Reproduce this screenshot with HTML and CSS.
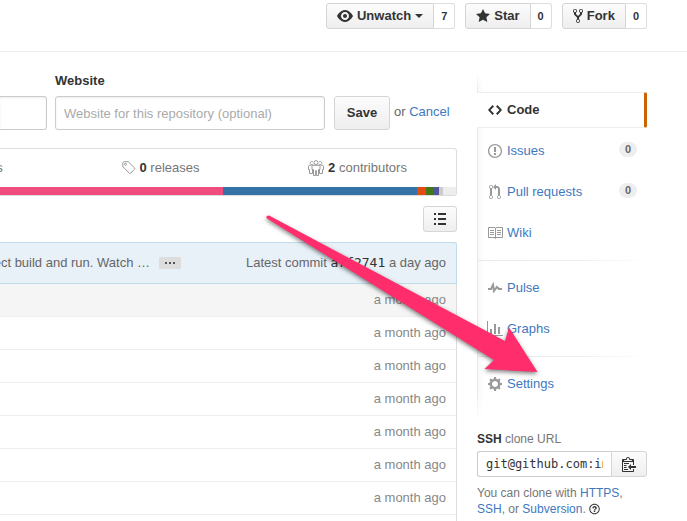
FILE: index.html
```html
<!DOCTYPE html>
<html lang="en">
<head>
<meta charset="utf-8">
<meta name="viewport" content="width=device-width, initial-scale=1">
<title>Repository</title>
<link rel="stylesheet" href="styles.css">
</head>
<body>
<header class="repo-head">
  <div class="btn-group">
    <button class="btn btn-sm" type="button">
      <svg class="icon" width="16" height="16" viewBox="0 0 16 16"><path fill-rule="evenodd" d="M8.060 2C3 2 0 8 0 8s3 6 8.060 6C13 14 16 8 16 8s-3-6-7.940-6zM8 12c-2.200 0-4-1.780-4-4 0-2.200 1.800-4 4-4 2.220 0 4 1.800 4 4 0 2.220-1.780 4-4 4zm2-4c0 1.110-.890 2-2 2-1.110 0-2-.890-2-2 0-1.110.890-2 2-2 1.110 0 2 .890 2 2z"/></svg>
      Unwatch<span class="caret"></span>
    </button>
    <a class="count" href="#watchers">7</a>
  </div>
  <div class="btn-group">
    <button class="btn btn-sm" type="button">
      <svg class="icon" width="14" height="16" viewBox="0 0 14 16"><path d="M14 6l-4.900-.640L7 1 4.900 5.360 0 6l3.600 3.260L2.670 14 7 11.670 11.330 14l-.930-4.740z"/></svg>
      Star
    </button>
    <a class="count" href="#stars">0</a>
  </div>
  <div class="btn-group">
    <button class="btn btn-sm" type="button">
      <svg class="icon" width="10" height="16" viewBox="0 0 10 16"><path fill-rule="evenodd" d="M8 1a1.993 1.993 0 0 0-1 3.720V6L5 8 3 6V4.720A1.993 1.993 0 0 0 2 1a1.993 1.993 0 0 0-1 3.720V6.500l3 3v1.780A1.993 1.993 0 0 0 5 15a1.993 1.993 0 0 0 1-3.720V9.500l3-3V4.720A1.993 1.993 0 0 0 8 1zM2 4.200C1.340 4.200.8 3.650.8 3c0-.650.550-1.200 1.200-1.200.650 0 1.200.550 1.200 1.200 0 .650-.550 1.200-1.200 1.200zm3 10c-.660 0-1.200-.550-1.200-1.200 0-.650.550-1.200 1.200-1.200.650 0 1.200.550 1.200 1.200 0 .650-.550 1.200-1.200 1.200zm3-10c-.660 0-1.200-.550-1.200-1.200 0-.650.550-1.200 1.200-1.200.650 0 1.200.550 1.200 1.200 0 .650-.550 1.200-1.200 1.200z"/></svg>
      Fork
    </button>
    <a class="count" href="#forks">0</a>
  </div>
</header>

<div class="layout">
  <main class="main">
    <form class="meta-form">
      <input class="field field-desc" type="text" aria-label="Description">
      <div class="field-group">
        <label for="website">Website</label>
        <input class="field" id="website" type="text" placeholder="Website for this repository (optional)">
      </div>
      <button class="btn btn-save" type="button">Save</button>
      <span class="cancel">or <a href="#cancel">Cancel</a></span>
    </form>

    <section class="stats">
      <ul class="stats-list">
        <li>
          <svg class="stat-icon" width="10" height="16" viewBox="0 0 10 16"><circle cx="2" cy="3" r="1.500"/><circle cx="2" cy="13" r="1.500"/><circle cx="8" cy="4" r="1.500"/><path d="M2 4.500v7M8 5.500q0 3-6 4"/></svg>
          <span><strong>1</strong> branches</span>
        </li>
        <li>
          <svg class="stat-icon" width="14" height="16" viewBox="0 0 14 16"><path d="M.8 3.500v3l6.600 6.800q.5.500 1 0l4.300-4.200q.5-.5 0-1L6.200 1.700H2.500Q.8 1.700.8 3.500z"/><circle cx="3.500" cy="4.300" r="1"/></svg>
          <span><strong>0</strong> releases</span>
        </li>
        <li>
          <svg class="stat-icon" width="16" height="16" viewBox="0 0 16 16"><circle cx="8" cy="2.600" r="2"/><path d="M5 5.300h6q1 0 1 1v3.200H10.500V15.500H8.400V10.500H7.600V15.500H5.500V9.500H4V6.300q0-1 1-1z"/><path d="M5.300 3.700A1.600 1.600 0 1 1 4.900 1.900M10.700 3.700A1.600 1.600 0 1 0 11.100 1.900M3.600 5.300H1.500q-1 0-1 1v3.200h1V13.500H4.500V10M12.400 5.300h2.100q1 0 1 1v3.200h-1V13.500H11.500V10"/></svg>
          <span><strong>2</strong> contributors</span>
        </li>
      </ul>
      <div class="languages">
        <span class="lang lang-a"></span><span class="lang lang-b"></span><span class="lang lang-c"></span><span class="lang lang-d"></span><span class="lang lang-e"></span><span class="lang lang-f"></span><span class="lang lang-g"></span>
      </div>
    </section>

    <div class="toolbar">
      <button class="btn btn-list" type="button" aria-label="List">
        <svg class="icon" width="12" height="12" viewBox="0 0 12 12"><path d="M0 0h2v2H0zM4 0h8v2H4zM0 5h2v2H0zM4 5h8v2H4zM0 10h2v2H0zM4 10h8v2H4z"/></svg>
      </button>
    </div>

    <section class="files">
      <div class="commit">
        <div class="commit-title"><span>project build and run. Watch …</span><button class="expander" type="button" aria-label="More"><i></i><i></i><i></i></button></div>
        <div>Latest commit <a class="sha" href="#commit">a7f2741</a> a day ago</div>
      </div>
      <table class="file-table">
        <tbody>
          <tr><td>a month ago</td></tr>
          <tr><td>a month ago</td></tr>
          <tr><td>a month ago</td></tr>
          <tr><td>a month ago</td></tr>
          <tr><td>a month ago</td></tr>
          <tr><td>a month ago</td></tr>
          <tr><td>a month ago</td></tr>
          <tr><td></td></tr>
        </tbody>
      </table>
    </section>
  </main>

  <aside class="side">
    <nav class="menu">
      <a class="item selected" href="#code"><svg class="icon" width="16" height="16" viewBox="-1 0 16 16"><path d="M9.500 3L8 4.500 11.500 8 8 11.500 9.500 13 14 8 9.500 3zm-5 0L0 8l4.500 5L6 11.500 2.500 8 6 4.500 4.500 3z"/></svg>Code</a>
      <a class="item" href="#issues"><svg class="icon" width="16" height="16" viewBox="-1 0 16 16"><path fill-rule="evenodd" d="M7 2.300c3.140 0 5.700 2.560 5.700 5.700s-2.560 5.700-5.700 5.700A5.710 5.710 0 0 1 1.300 8c0-3.140 2.560-5.700 5.700-5.700zM7 1C3.140 1 0 4.140 0 8s3.140 7 7 7 7-3.140 7-7-3.140-7-7-7zm1 3H6v5h2V4zm0 6H6v2h2v-2z"/></svg>Issues<span class="pill">0</span></a>
      <a class="item" href="#pulls"><svg class="icon" width="16" height="16" viewBox="-2 0 16 16"><path fill-rule="evenodd" d="M11 11.280V5c-.030-.780-.340-1.470-.940-2.060C9.460 2.350 8.780 2.030 8 2H7V0L4 3l3 3V4h1c.270.020.480.110.690.310.210.200.300.420.310.690v6.280A1.993 1.993 0 0 0 10 15a1.993 1.993 0 0 0 1-3.720zm-1 2.920c-.660 0-1.200-.550-1.200-1.200 0-.650.550-1.200 1.200-1.200.650 0 1.200.550 1.200 1.200 0 .650-.550 1.200-1.200 1.200zM4 3c0-1.110-.890-2-2-2a1.993 1.993 0 0 0-1 3.720v6.560A1.993 1.993 0 0 0 2 15a1.993 1.993 0 0 0 1-3.720V4.720c.590-.340 1-.980 1-1.720zm-.8 10c0 .660-.550 1.200-1.200 1.200-.650 0-1.200-.550-1.200-1.200 0-.650.550-1.200 1.200-1.200.650 0 1.200.550 1.200 1.200zM2 4.200C1.340 4.200.8 3.650.8 3c0-.650.550-1.200 1.200-1.200.650 0 1.200.550 1.200 1.200 0 .650-.550 1.200-1.200 1.200z"/></svg>Pull requests<span class="pill">0</span></a>
      <a class="item" href="#wiki"><svg class="icon" width="16" height="16" viewBox="0 0 16 16"><path fill-rule="evenodd" d="M3 5h4v1H3V5zm0 3h4V7H3v1zm0 2h4V9H3v1zm11-5h-4v1h4V5zm0 2h-4v1h4V7zm0 2h-4v1h4V9zm2-6v9c0 .550-.450 1-1 1H9.500l-1 1-1-1H2c-.550 0-1-.450-1-1V3c0-.550.450-1 1-1h5.500l1 1 1-1H15c.550 0 1 .450 1 1zm-8 .5L7.500 3H2v9h6V3.500zm7-.5H9.500l-.5.5V12h6V3z"/></svg>Wiki</a>
      <div class="rule"></div>
      <a class="item" href="#pulse"><svg class="icon" width="16" height="16" viewBox="-1 0 16 16"><path d="M11.500 8L8.800 5.400 6.600 8.500 5.500 1.600 2.380 8H0v2h3.600l.9-1.800.9 5.400L9 8.500l1.600 1.500H14V8h-2.500z"/></svg>Pulse</a>
      <a class="item" href="#graphs"><svg class="icon" width="16" height="16" viewBox="0 0 16 16"><path d="M16 14v1H0V0h1v14h15zM5 13H3V8h2v5zm4 0H7V3h2v10zm4 0h-2V6h2v7z"/></svg>Graphs</a>
      <div class="rule"></div>
      <a class="item" href="#settings"><svg class="icon" width="16" height="16" viewBox="-1 0 16 16"><path fill-rule="evenodd" d="M14 8.770v-1.600l-1.940-.640-.450-1.090.880-1.840-1.130-1.130-1.810.910-1.090-.450-.690-1.920h-1.600l-.630 1.940-1.110.450-1.840-.880-1.130 1.130.910 1.810-.450 1.090L0 7.230v1.590l1.940.640.450 1.090-.880 1.840 1.130 1.130 1.810-.910 1.090.450.690 1.920h1.590l.630-1.940 1.110-.450 1.840.880 1.130-1.130-.920-1.810.470-1.090L14 8.750zM7 11c-1.660 0-3-1.340-3-3s1.340-3 3-3 3 1.340 3 3-1.340 3-3 3z"/></svg>Settings</a>
    </nav>

    <section class="clone">
      <label for="clone-url"><strong>SSH</strong> clone URL</label>
      <div class="clone-row">
        <div class="clone-field"><input id="clone-url" type="text" value="git@github.com:inbox/app.git" readonly></div>
        <button class="btn btn-copy" type="button" aria-label="Copy">
          <svg class="icon" width="14" height="16" viewBox="0 0 14 16"><path fill-rule="evenodd" d="M2 13h4v1H2v-1zm5-6H2v1h5V7zm2 3V8l-3 3 3 3v-2h5v-2H9zM4.500 9H2v1h2.500V9zM2 12h2.500v-1H2v1zm9 1h1v2c-.020.280-.110.520-.3.7-.190.180-.420.280-.7.3H1c-.550 0-1-.450-1-1V4c0-.550.450-1 1-1h3c0-1.110.890-2 2-2 1.110 0 2 .890 2 2h3c.550 0 1 .450 1 1v5h-1V6H1v9h10v-2zM2 5h8c0-.550-.450-1-1-1H8c-.550 0-1-.450-1-1s-.450-1-1-1-1 .450-1 1-.450 1-1 1H3c-.550 0-1 .450-1 1z"/></svg>
        </button>
      </div>
      <p>You can clone with <a href="#https">HTTPS</a>, <a href="#ssh">SSH</a>, or <a href="#svn">Subversion</a>.
        <svg class="help" width="11" height="12" viewBox="0 0 14 16"><path fill-rule="evenodd" d="M6 10h2v2H6v-2zm4-3.500C10 8.640 8 9 8 9H6c0-.550.450-1 1-1h.5c.280 0 .5-.220.5-.5v-1c0-.280-.220-.5-.5-.5h-1c-.280 0-.5.220-.5.5V7H4c0-1.500 1.500-3 3-3s3 1 3 2.500zM7 2.300c3.140 0 5.700 2.560 5.700 5.700s-2.560 5.700-5.700 5.700A5.710 5.710 0 0 1 1.300 8c0-3.140 2.560-5.700 5.700-5.700zM7 1C3.140 1 0 4.140 0 8s3.140 7 7 7 7-3.140 7-7-3.140-7-7-7z"/></svg></p>
    </section>
  </aside>
</div>

<svg class="pointer" width="290" height="180" viewBox="260 205 290 180" aria-hidden="true">
  <path d="M269 215.500L505 341L509 327.500L537.500 372L484.500 369L494 360L267 218.500Q265 216 269 215.500z"/>
</svg>
</body>
</html>
```
FILE: styles.css
```css
* { box-sizing: border-box; }

html { scrollbar-width: none; }

body {
  margin: 0;
  position: relative;
  overflow-x: hidden;
  background: #fff;
  color: #666;
  font: 13px/18px "Liberation Sans", Arial, sans-serif;
}

button, input { font: inherit; }
a { color: #4078c0; text-decoration: none; }
strong { color: #333; }
.icon { fill: currentColor; flex: none; }

.btn {
  display: flex;
  align-items: center;
  justify-content: center;
  gap: 4px;
  padding: 0 10px;
  border: 1px solid #d5d5d5;
  border-radius: 3px;
  background: linear-gradient(#fcfcfc, #eee);
  color: #333;
  font-weight: bold;
}

.repo-head {
  display: flex;
  justify-content: flex-end;
  gap: 10px;
  padding: 3px 40px 22px 0;
  border-bottom: 1px solid #eee;
}

.btn-group { display: flex; height: 26px; }
.btn-sm { border-radius: 3px 0 0 3px; }

.caret {
  border: 4px solid transparent;
  border-top-color: #333;
  border-bottom: 0;
}

.count {
  padding: 0 7px;
  border: 1px solid #ddd;
  border-left: 0;
  border-radius: 0 3px 3px 0;
  color: #333;
  font-size: 11px;
  font-weight: bold;
  line-height: 24px;
}

.layout {
  display: grid;
  grid-template-columns: minmax(0, 1fr) 170px;
  gap: 20px;
  padding: 20px 40px 0 0;
}

.meta-form { display: flex; align-items: flex-end; }

.field {
  width: 100%;
  height: 34px;
  padding: 0 8px;
  border: 1px solid #ccc;
  border-radius: 3px;
  box-shadow: inset 0 1px 2px rgba(0, 0, 0, 0.075);
}

.field::placeholder { color: #aaa; }

.field-desc {
  flex: 1;
  width: 0;
  border-left: 0;
  border-radius: 0 3px 3px 0;
}

.field-group { width: 270px; margin: 0 9px 0 8px; }

.field-group label {
  display: block;
  margin-bottom: 6px;
  color: #333;
  font-weight: bold;
}

.btn-save { width: 56px; height: 34px; }
.cancel { width: 67px; padding-left: 4px; line-height: 36px; }

.stats {
  margin-top: 18px;
  border: 1px solid #ddd;
  border-left: 0;
  border-radius: 0 3px 3px 0;
  overflow: hidden;
}

.stats-list {
  display: flex;
  justify-content: flex-end;
  margin: 0;
  padding: 0;
  list-style: none;
  color: #767676;
}

.stats-list li {
  flex: none;
  display: flex;
  align-items: center;
  justify-content: center;
  gap: 4px;
  width: 197px;
  height: 38px;
}

.stat-icon { fill: none; stroke: #999; stroke-width: 1; }

.languages { display: flex; height: 8px; }
.lang { flex: none; }
.lang-a { flex: 1; background: #ee4d7d; }
.lang-b { width: 194px; background: #3572a5; }
.lang-c { width: 9px; background: #e34c10; }
.lang-d { width: 8px; background: #427819; }
.lang-e { width: 5px; background: #555599; }
.lang-f { width: 4px; background: #ccc; }
.lang-g { width: 13px; background: #ededed; }

.toolbar { display: flex; justify-content: flex-end; margin: 10px 0; }
.btn-list { width: 34px; height: 26px; }

.files {
  border-right: 1px solid #ddd;
  border-radius: 0 3px 0 0;
}

.commit {
  display: flex;
  justify-content: space-between;
  align-items: center;
  height: 42px;
  margin-right: -1px;
  padding-right: 10px;
  border: 1px solid #c1dce9;
  border-left: 0;
  border-radius: 0 3px 0 0;
  background: #e8f0f8;
  white-space: nowrap;
}

.commit-title {
  display: flex;
  justify-content: flex-end;
  align-items: center;
  gap: 9px;
  width: 181px;
}

.expander {
  display: flex;
  flex: none;
  align-items: center;
  justify-content: center;
  gap: 2px;
  width: 22px;
  height: 12px;
  padding: 0;
  border: 0;
  border-radius: 1px;
  background: #ddd;
}

.expander i { width: 2px; height: 2px; background: #555; }

.sha {
  color: #333;
  font: 13px/18px "DejaVu Sans Mono", monospace;
}

.file-table {
  width: 100%;
  border-collapse: separate;
  border-spacing: 0;
}

.file-table td {
  height: 33px;
  padding: 0 10px;
  border-bottom: 1px solid #eee;
  color: #888;
  text-align: right;
}

.file-table tr:first-child td { background: #f5f5f5; }

.menu {
  padding: 20px 0 23px;
  background:
    linear-gradient(#fff, rgba(255, 255, 255, 0) 20px, rgba(255, 255, 255, 0) calc(100% - 40px), #fff calc(100% - 10px)),
    linear-gradient(90deg, #e8e8e8 1px, #f8f8f8 1px, #fff 7px);
}

.item {
  display: flex;
  align-items: center;
  gap: 4px;
  height: 36px;
  margin-bottom: 5px;
  padding: 0 10px;
}

.item .icon { color: #999; }

.item.selected {
  border: 1px solid #eee;
  border-left: 0;
  border-right: 3px solid #ca6300;
  border-radius: 0 2px 2px 0;
  background: #fff;
  color: #333;
  font-weight: bold;
}

.item.selected .icon { color: #333; }

.pill {
  margin: 0 0 4px auto;
  padding: 0 6px;
  border-radius: 8px;
  background: #eee;
  color: #666;
  font-size: 11px;
  font-weight: bold;
  line-height: 15px;
}

.rule {
  height: 1px;
  margin: 9px 0;
  background: linear-gradient(90deg, #e8e8e8, #eee 60%, #fff);
}

.clone { color: #767676; font-size: 12px; }
.clone label { display: block; margin-bottom: 3px; }
.clone-row { display: flex; height: 26px; }

.clone-field {
  flex: 1;
  min-width: 0;
  padding: 0 8px;
  border: 1px solid #ccc;
  border-right: 0;
  border-radius: 3px 0 0 3px;
}

.clone-field input {
  width: 100%;
  height: 24px;
  padding: 0;
  border: 0;
  outline: 0;
  background: none;
  color: #333;
  font: 12px/24px "DejaVu Sans Mono", monospace;
}

.btn-copy { width: 36px; border-radius: 0 3px 3px 0; }

.clone p { margin: 8px 0 0; line-height: 16px; }
.help { fill: #333; vertical-align: -2px; }

.pointer {
  position: absolute;
  left: 260px;
  top: 205px;
  pointer-events: none;
  fill: #ff2d6c;
  filter: drop-shadow(0 2px 2px rgba(0, 0, 0, 0.5));
}
```
